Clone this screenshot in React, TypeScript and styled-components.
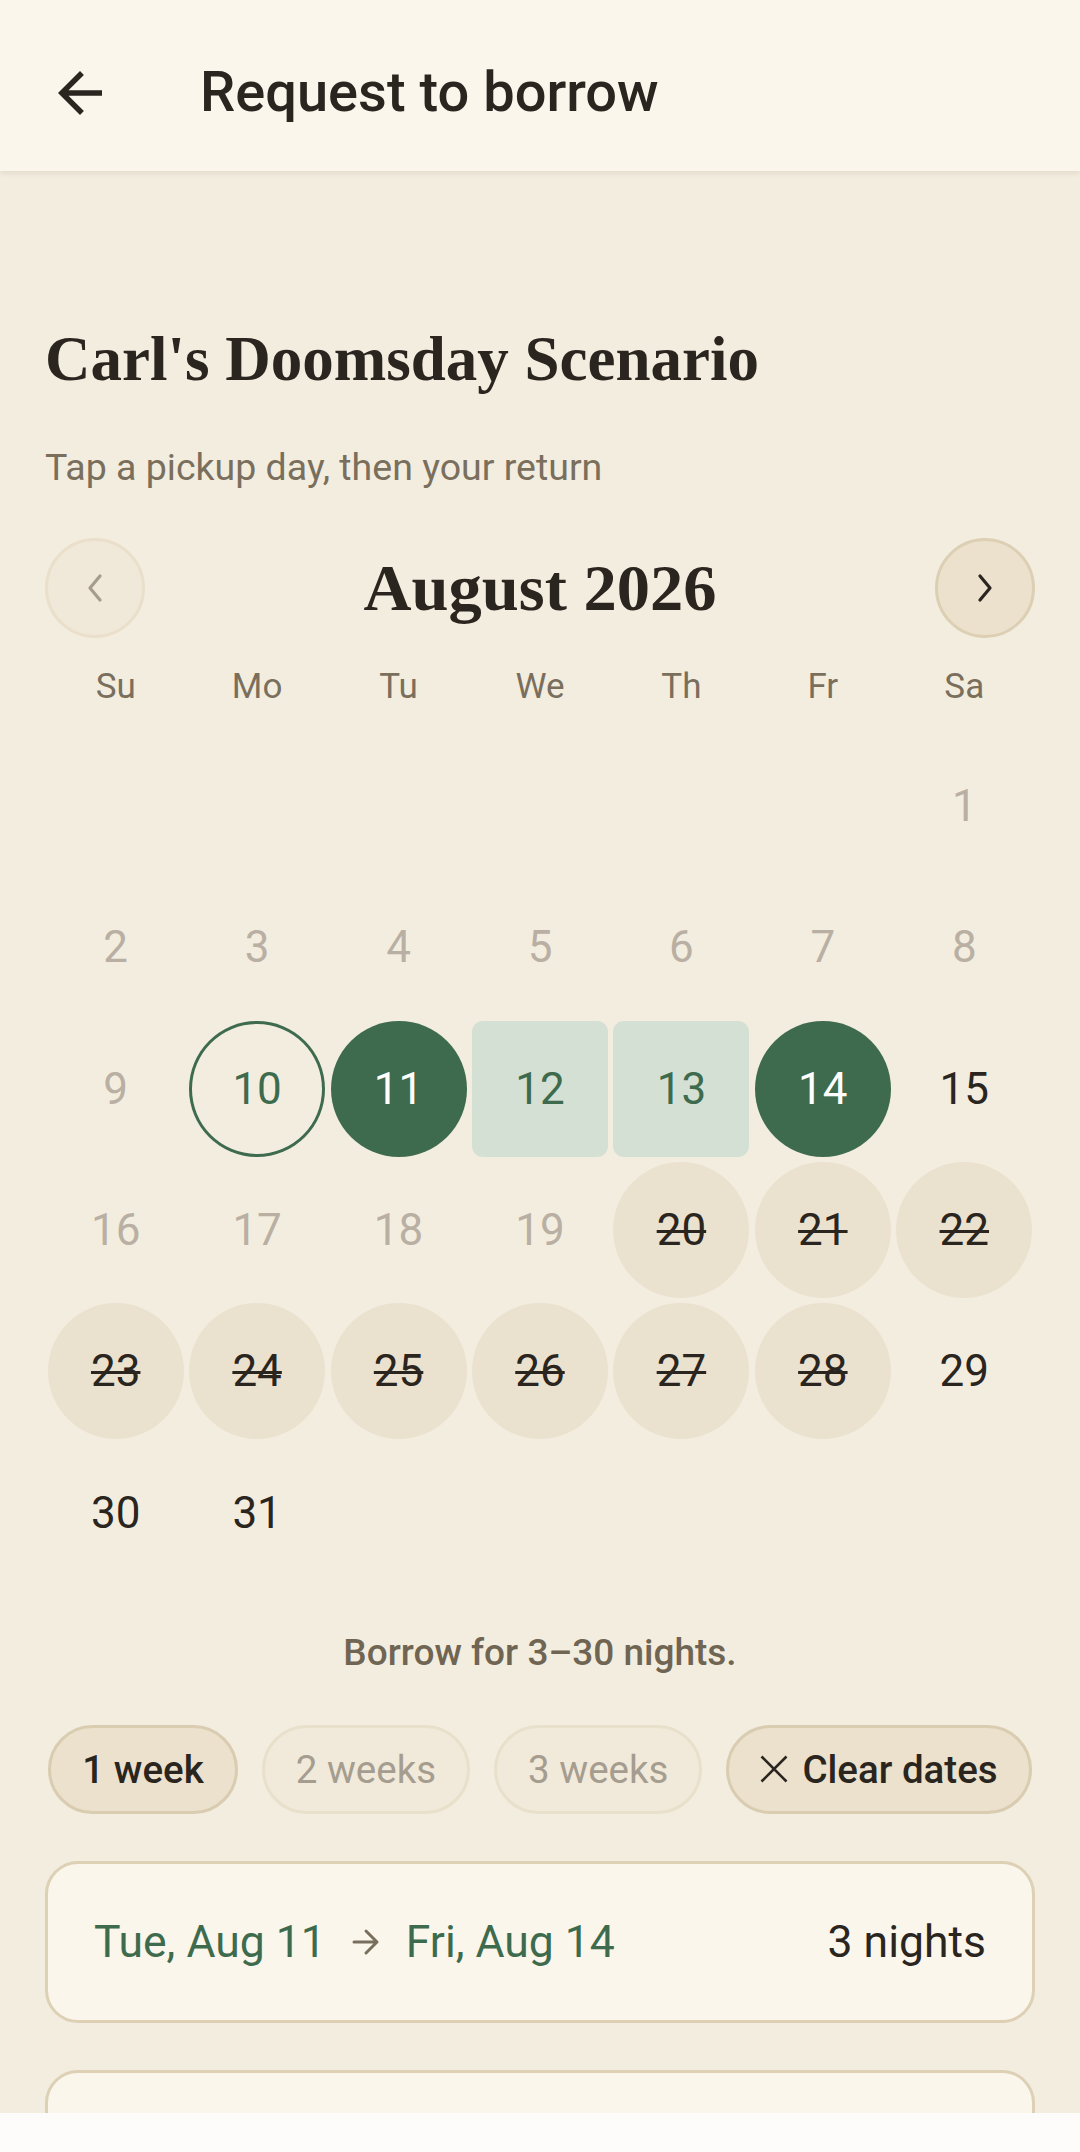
import React from 'react';
import styled, { createGlobalStyle, css } from 'styled-components';

const GlobalStyle = createGlobalStyle`
  * { box-sizing: border-box; }
  html, body {
    margin: 0;
    padding: 0;
    background: #f3ede0;
  }
  body {
    font-family: Roboto, "Noto Sans", "Liberation Sans", sans-serif;
    color: #2b2520;
  }
`;

const palette = {
  page: '#f3ede0',
  surface: '#faf6ec',
  ink: '#2b2520',
  muted: '#7a6f5c',
  faint: '#b9b0a3',
  green: '#3e6b4d',
  range: '#d4e0d4',
  booked: '#ebe1cf',
  chip: '#ebe1cd',
  chipBorder: '#d9ccb1',
  line: '#ddd0b5',
};

const serif = `"Liberation Serif", "DejaVu Serif", serif`;

/* ---------- top app bar ---------- */

const AppBar = styled.header`
  position: sticky;
  top: 0;
  z-index: 2;
  height: 171px;
  padding: 14px 0 0 36px;
  display: flex;
  align-items: center;
  background: ${palette.surface};
  box-shadow: 0 2px 6px rgba(90, 70, 40, 0.12);
`;

const BackButton = styled.button`
  width: 88px;
  height: 88px;
  border: 0;
  padding: 0;
  background: transparent;
  display: flex;
  align-items: center;
  justify-content: center;
  color: ${palette.ink};
  cursor: pointer;
`;

const AppBarTitle = styled.h1`
  margin: 0 0 0 76px;
  font-size: 56px;
  font-weight: 500;
  line-height: 1.2;
  color: ${palette.ink};
`;

/* ---------- page body ---------- */

const Main = styled.main`
  padding: 150px 45px 300px;
  display: flex;
  flex-direction: column;
`;

const ItemTitle = styled.h2`
  margin: 0;
  font-family: ${serif};
  font-size: 63px;
  line-height: 76px;
  font-weight: 700;
  color: ${palette.ink};
`;

const Hint = styled.p`
  margin: 43px 0 0;
  font-size: 37.5px;
  line-height: 54px;
  color: ${palette.muted};
`;

const MonthNav = styled.div`
  margin-top: 44px;
  height: 100px;
  display: flex;
  align-items: center;
  justify-content: space-between;
`;

const NavButton = styled.button<{ $enabled: boolean }>`
  width: 100px;
  height: 100px;
  padding: 0;
  border-radius: 50%;
  display: flex;
  align-items: center;
  justify-content: center;
  cursor: pointer;
  ${({ $enabled }) =>
    $enabled
      ? css`
          background: #ebe1cd;
          border: 3px solid #dccfb3;
          color: ${palette.ink};
        `
      : css`
          background: #f0e8d8;
          border: 3px solid #e9dfcb;
          color: #a59c8d;
        `}
`;

const MonthLabel = styled.div`
  font-family: ${serif};
  font-size: 66.5px;
  font-weight: 700;
  line-height: 100px;
  color: ${palette.ink};
`;

const WeekHeader = styled.div`
  margin-top: 18px;
  height: 60px;
  display: grid;
  grid-template-columns: repeat(7, 1fr);
  align-items: center;
`;

const WeekdayLabel = styled.span`
  text-align: center;
  font-size: 35px;
  font-weight: 400;
  color: ${palette.muted};
`;

const DayGrid = styled.div`
  margin-top: 19px;
  display: grid;
  grid-template-columns: repeat(7, 1fr);
  grid-auto-rows: 141.43px;
`;

type DayState =
  | 'blank'
  | 'past'
  | 'today'
  | 'start'
  | 'range'
  | 'end'
  | 'open'
  | 'booked';

const DayCell = styled.div`
  padding: 2.75px;
  display: flex;
`;

const DayMark = styled.span<{ $state: DayState }>`
  flex: 1;
  display: flex;
  align-items: center;
  justify-content: center;
  font-size: 44px;
  font-weight: 400;
  border-radius: 50%;
  color: ${palette.ink};
  ${({ $state }) => {
    switch ($state) {
      case 'past':
        return css`color: ${palette.faint};`;
      case 'today':
        return css`
          color: ${palette.green};
          box-shadow: inset 0 0 0 3px ${palette.green};
        `;
      case 'start':
      case 'end':
        return css`
          color: #ffffff;
          background: ${palette.green};
        `;
      case 'range':
        return css`
          color: ${palette.green};
          background: ${palette.range};
          border-radius: 11px;
        `;
      case 'booked':
        return css`
          background: ${palette.booked};
          text-decoration: line-through;
          text-decoration-thickness: 3px;
        `;
      default:
        return css``;
    }
  }}
`;

const LimitNote = styled.p`
  margin: 42px 0 0;
  text-align: center;
  font-size: 37px;
  line-height: 54px;
  font-weight: 500;
  color: #6f6552;
`;

const ChipRow = styled.div`
  margin-top: 45px;
  display: flex;
  justify-content: center;
  gap: 24px;
`;

const Chip = styled.button<{ $active: boolean }>`
  height: 89px;
  padding: 0 31px;
  border-radius: 999px;
  display: flex;
  align-items: center;
  gap: 14px;
  font-family: Roboto, "Noto Sans", sans-serif;
  font-size: 38.5px;
  cursor: pointer;
  ${({ $active }) =>
    $active
      ? css`
          background: ${palette.chip};
          border: 3px solid ${palette.chipBorder};
          color: ${palette.ink};
          font-weight: 500;
        `
      : css`
          background: #f1e9d9;
          border: 3px solid #e9e0cc;
          color: #a59d8f;
          font-weight: 400;
        `}
`;

const SummaryCard = styled.section`
  margin-top: 47px;
  height: 162px;
  padding: 0 46px;
  display: flex;
  align-items: center;
  justify-content: space-between;
  background: ${palette.surface};
  border: 3px solid ${palette.line};
  border-radius: 33px;
`;

const DateSpan = styled.div`
  display: flex;
  align-items: center;
  gap: 26px;
  font-size: 44.5px;
  color: ${palette.green};
`;

const NightCount = styled.span`
  font-size: 44.5px;
  color: ${palette.ink};
`;

const DetailsCard = styled.section`
  margin-top: 47px;
  min-height: 320px;
  background: ${palette.surface};
  border: 3px solid ${palette.line};
  border-radius: 33px;
`;

const BottomBar = styled.footer`
  position: fixed;
  left: 0;
  right: 0;
  bottom: 0;
  height: 39px;
  background: #fdfcfa;
  z-index: 3;
`;

/* ---------- icons ---------- */

const BackArrow = () => (
  <svg width="66" height="66" viewBox="0 0 24 24" aria-hidden>
    <path
      fill="currentColor"
      d="M20 11H7.83l5.59-5.59L12 4l-8 8 8 8 1.41-1.41L7.83 13H20v-2z"
    />
  </svg>
);

const Chevron = ({ dir }: { dir: 'left' | 'right' }) => (
  <svg width="20" height="30" viewBox="0 0 20 30" aria-hidden>
    <path
      d={dir === 'left' ? 'M15 3 L5 15 L15 27' : 'M5 3 L15 15 L5 27'}
      fill="none"
      stroke="currentColor"
      strokeWidth="3.2"
      strokeLinecap="round"
      strokeLinejoin="round"
    />
  </svg>
);

const CloseIcon = () => (
  <svg width="28" height="28" viewBox="0 0 28 28" aria-hidden>
    <path
      d="M1.5 1.5 L26.5 26.5 M26.5 1.5 L1.5 26.5"
      fill="none"
      stroke="currentColor"
      strokeWidth="2.6"
    />
  </svg>
);

const RightArrow = () => (
  <svg width="28" height="28" viewBox="0 0 28 28" aria-hidden>
    <path
      d="M2 14 H25 M14 3 L25 14 L14 25"
      fill="none"
      stroke="#7a6f5c"
      strokeWidth="3"
      strokeLinecap="round"
      strokeLinejoin="round"
    />
  </svg>
);

/* ---------- calendar data ---------- */

const weekdays = ['Su', 'Mo', 'Tu', 'We', 'Th', 'Fr', 'Sa'];
const leadingBlanks = 6; // Aug 1, 2026 falls on a Saturday

function stateFor(day: number): DayState {
  if (day === 10) return 'today';
  if (day === 11) return 'start';
  if (day === 12 || day === 13) return 'range';
  if (day === 14) return 'end';
  if (day >= 20 && day <= 28) return 'booked';
  if (day < 10 || (day >= 16 && day <= 19)) return 'past';
  return 'open';
}

const cells: { key: string; day?: number; state: DayState }[] = [
  ...Array.from({ length: leadingBlanks }, (_, i) => ({
    key: `b${i}`,
    state: 'blank' as DayState,
  })),
  ...Array.from({ length: 31 }, (_, i) => ({
    key: `d${i + 1}`,
    day: i + 1,
    state: stateFor(i + 1),
  })),
];

const durations = [
  { label: '1 week', active: true },
  { label: '2 weeks', active: false },
  { label: '3 weeks', active: false },
];

export default function App() {
  return (
    <>
      <GlobalStyle />
      <AppBar>
        <BackButton aria-label="Back">
          <BackArrow />
        </BackButton>
        <AppBarTitle>Request to borrow</AppBarTitle>
      </AppBar>

      <Main>
        <ItemTitle>Carl's Doomsday Scenario</ItemTitle>
        <Hint>Tap a pickup day, then your return</Hint>

        <MonthNav>
          <NavButton $enabled={false} aria-label="Previous month">
            <Chevron dir="left" />
          </NavButton>
          <MonthLabel>August 2026</MonthLabel>
          <NavButton $enabled aria-label="Next month">
            <Chevron dir="right" />
          </NavButton>
        </MonthNav>

        <WeekHeader>
          {weekdays.map((w) => (
            <WeekdayLabel key={w}>{w}</WeekdayLabel>
          ))}
        </WeekHeader>

        <DayGrid>
          {cells.map((c) => (
            <DayCell key={c.key}>
              {c.day !== undefined && <DayMark $state={c.state}>{c.day}</DayMark>}
            </DayCell>
          ))}
        </DayGrid>

        <LimitNote>Borrow for 3–30 nights.</LimitNote>

        <ChipRow>
          {durations.map((d) => (
            <Chip key={d.label} $active={d.active}>
              {d.label}
            </Chip>
          ))}
          <Chip $active>
            <CloseIcon />
            Clear dates
          </Chip>
        </ChipRow>

        <SummaryCard>
          <DateSpan>
            <span>Tue, Aug 11</span>
            <RightArrow />
            <span>Fri, Aug 14</span>
          </DateSpan>
          <NightCount>3 nights</NightCount>
        </SummaryCard>

        <DetailsCard />
      </Main>

      <BottomBar />
    </>
  );
}
